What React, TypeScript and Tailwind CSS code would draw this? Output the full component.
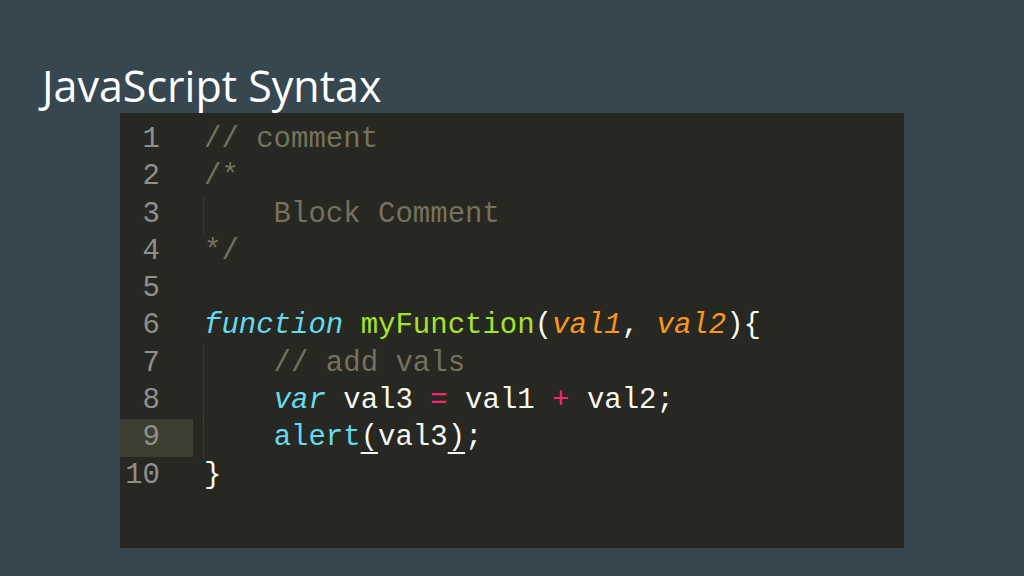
import React from "react";

const C = {
  cm: "text-[#75715e]",
  kw: "text-[#66d9ef] italic",
  fn: "text-[#a6e22e]",
  pa: "text-[#fd971f] italic",
  op: "text-[#f92672]",
  tx: "text-[#f8f8f2]",
  bi: "text-[#66d9ef]",
};

type Tok = [string, string];

const ul = " underline decoration-[#f8f8f2] decoration-2 underline-offset-[7px]";

const lines: { toks: Tok[]; guide?: boolean }[] = [
  { toks: [[C.cm, "// comment"]] },
  { toks: [[C.cm, "/*"]] },
  { toks: [[C.cm, "    Block Comment"]], guide: true },
  { toks: [[C.cm, "*/"]] },
  { toks: [] },
  {
    toks: [
      [C.kw, "function"],
      [C.tx, " "],
      [C.fn, "myFunction"],
      [C.tx, "("],
      [C.pa, "val1"],
      [C.tx, ", "],
      [C.pa, "val2"],
      [C.tx, "){"],
    ],
  },
  { toks: [[C.cm, "    // add vals"]], guide: true },
  {
    toks: [
      [C.tx, "    "],
      [C.kw, "var"],
      [C.tx, " val3 "],
      [C.op, "="],
      [C.tx, " val1 "],
      [C.op, "+"],
      [C.tx, " val2;"],
    ],
    guide: true,
  },
  {
    toks: [
      [C.tx, "    "],
      [C.bi, "alert"],
      [C.tx + ul, "("],
      [C.tx, "val3"],
      [C.tx + ul, ")"],
      [C.tx, ";"],
    ],
    guide: true,
  },
  { toks: [[C.tx, "}"]] },
];

export default function App() {
  return (
    <div className="w-[1024px] h-[576px] bg-[#37474f] flex flex-col overflow-hidden">
      <h1 className="pl-[42px] pt-[66px] text-[43px] leading-[40px] text-white font-['Open_Sans',sans-serif] font-normal">
        JavaScript Syntax
      </h1>
      <div className="ml-[120px] mt-[7px] w-[784px] h-[435px] bg-[#272822] pt-[8px] font-['Liberation_Mono',monospace] text-[29px] leading-[37.3px]">
        {lines.map((l, i) => (
          <div key={i} className="flex h-[37.3px]">
            <div
              className={`w-[73px] shrink-0 text-right pr-[33px] text-[#90908a] ${
                i === 8 ? "bg-[#3e3d32]" : ""
              }`}
            >
              {i + 1}
            </div>
            <div className="relative pl-[11px] whitespace-pre">
              {l.guide && (
                <span className="absolute left-[10px] top-0 bottom-0 border-l border-dotted border-[#4a4a40]" />
              )}
              {l.toks.map(([cls, t], j) => (
                <span key={j} className={cls}>
                  {t}
                </span>
              ))}
            </div>
          </div>
        ))}
      </div>
    </div>
  );
}
